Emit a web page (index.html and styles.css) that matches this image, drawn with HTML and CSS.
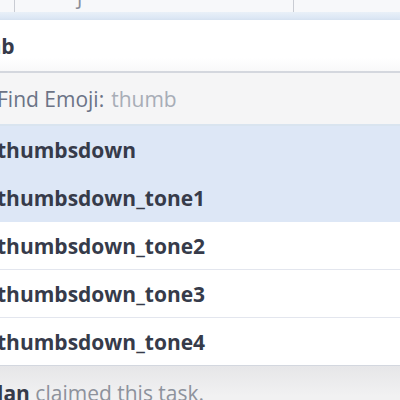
FILE: index.html
```html
<!DOCTYPE html>
<html>
<head>
    <title>Find Emoji</title>
    <link rel="stylesheet" href="styles.css">
</head>
<body>

    <div class="TopBar">
        <div class="TopCell TopFirst"></div>
        <div class="TopCell TopMiddle"><span class="Tail">j</span></div>
        <div class="TopCell TopLast"></div>
    </div>
    <div class="Band"></div>

    <div class="Panel">
        <div class="InputRow">
            <span class="Typed">thumb</span>
        </div>

        <div class="HintRow">
            <span class="HintLabel">Find Emoji:</span>
            <span class="HintQuery">thumb</span>
        </div>

        <ul class="Results">
            <li class="Result Focused">thumbsdown</li>
            <li class="Result Focused">thumbsdown_tone1</li>
            <li class="Result">thumbsdown_tone2</li>
            <li class="Result">thumbsdown_tone3</li>
            <li class="Result">thumbsdown_tone4</li>
        </ul>
    </div>

    <div class="Timeline">
        <b class="Author">lan</b> claimed this task.
    </div>

</body>
</html>
```

FILE: styles.css
```css
body {
    margin: 0;
    font-family: "Open Sans", "Noto Sans", sans-serif;
    background: #efeff0;
    overflow: hidden;
}

.TopBar {
    display: flex;
    height: 12px;
    background: #f7f8fa;
}

.TopCell {
    height: 100%;
}

.TopFirst {
    width: 14px;
    border-right: 1px solid #c9ccd3;
}

.TopMiddle {
    width: 278px;
    border-right: 1px solid #c9ccd3;
    position: relative;
    overflow: hidden;
}

.Tail {
    position: absolute;
    left: 62px;
    top: -18px;
    font-size: 21px;
    color: #8a8f9a;
}

.TopLast {
    flex: 1;
}

.Band {
    height: 8px;
    background: linear-gradient(#e9f0f8, #d8e4f3);
}

.Panel {
    background: #fff;
    box-shadow: 0 3px 5px rgba(0, 0, 0, 0.12);
    border-bottom: 1px solid #d3d7df;
    margin-left: -3px;
}

.InputRow {
    height: 51px;
    display: flex;
    align-items: center;
    overflow: hidden;
    border-bottom: 2px solid #d4d7de;
    background: linear-gradient(#ffffff 75%, #f8f8f9);
}

.Typed {
    font-size: 21px;
    font-weight: bold;
    color: #363b4a;
    margin-left: -53px;
}

.HintRow {
    height: 51px;
    display: flex;
    align-items: center;
    gap: 7px;
    background: #f5f5f6;
    border-bottom: 2px solid #d9e4ef;
    font-size: 21px;
}

.HintLabel {
    color: #6b7386;
}

.HintQuery {
    color: #a8adb7;
}

.Results {
    list-style: none;
    margin: 0;
    padding: 0;
}

.Result {
    height: 47px;
    display: flex;
    align-items: center;
    font-size: 21px;
    font-weight: bold;
    color: #363b4a;
    border-bottom: 1px solid #e3e6ee;
}

.Result:last-child {
    border-bottom: none;
}

.Focused {
    background: #dde7f6;
    border-bottom-color: #dde7f6;
}

.Timeline {
    padding: 13px 0 0;
    margin-left: -3px;
    font-size: 21px;
    line-height: 29px;
    color: #8d929c;
    background: linear-gradient(#e6e6e8, #f1f1f2 30px);
    height: 60px;
}

.Author {
    color: #363b4a;
}
```
